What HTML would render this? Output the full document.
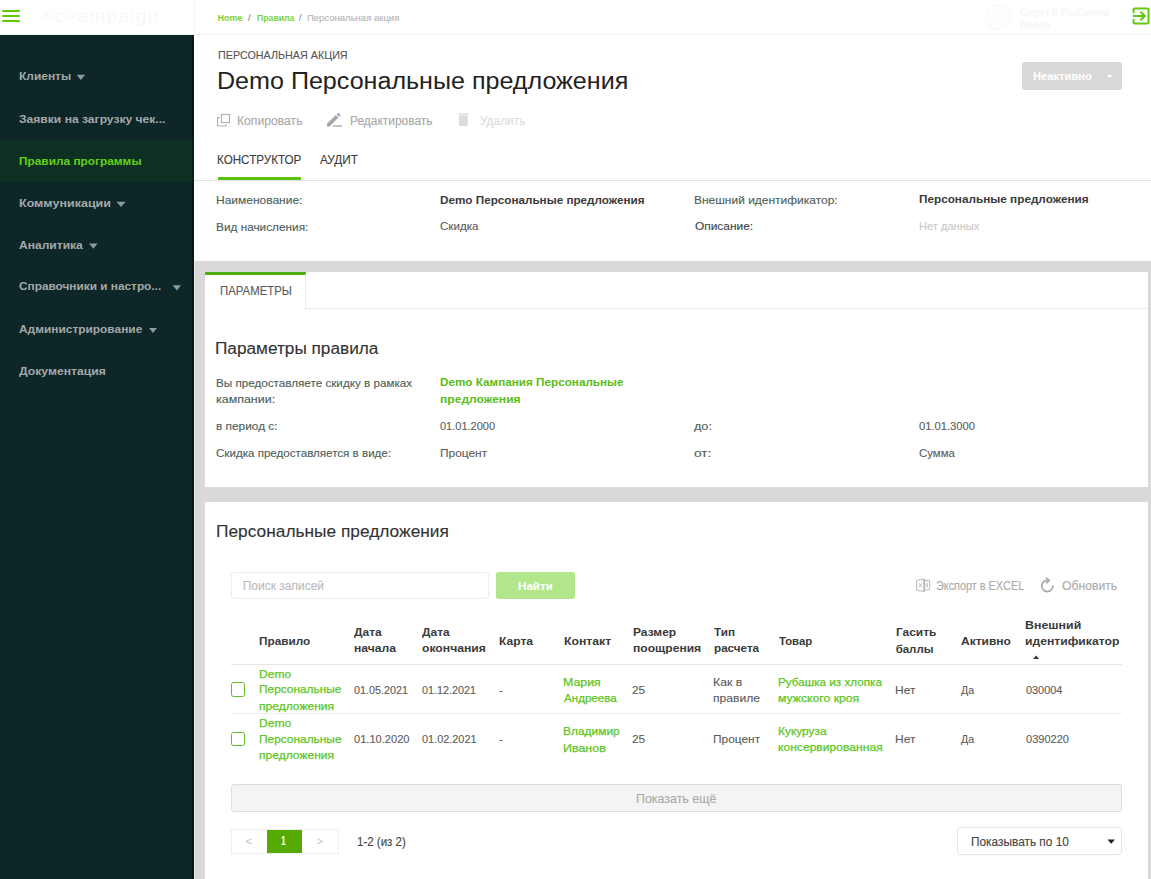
<!DOCTYPE html>
<html><head><meta charset="utf-8"><title>Demo Персональные предложения</title>
<style>
html,body{margin:0;padding:0;width:1151px;height:879px;overflow:hidden;background:#fff;}
body{position:relative;font-family:"Liberation Sans", sans-serif;}
.t{position:absolute;white-space:pre;line-height:1;font-family:"Liberation Sans", sans-serif;transform-origin:0 0;-webkit-text-stroke:0.12px currentColor;}
.t.bd{-webkit-text-stroke:0;}
.b{position:absolute;box-sizing:border-box;}
</style></head><body>
<!-- sidebar -->
<div class="b" style="left:0;top:35px;width:194px;height:844px;background:#0d2628;"></div>
<div class="b" style="left:0;top:140px;width:194px;height:42px;background:#0e3023;"></div>
<div class="b" style="left:192px;top:35px;width:2px;height:844px;background:rgba(0,0,0,0.35);"></div>
<!-- sidebar triangles -->
<svg class="b" style="left:0;top:0" width="194" height="400">
<g fill="#8c9c98">
<path d="M76.5 74.7 L85.2 74.7 L80.85 79.9Z"/>
<path d="M116.5 201.7 L125.6 201.7 L121.05 206.9Z"/>
<path d="M89 243.6 L97.7 243.6 L93.35 248.8Z"/>
<path d="M172.7 285.3 L181 285.3 L176.85 290.4Z"/>
<path d="M149 327.9 L157 327.9 L153 333Z"/>
</g></svg>
<!-- header -->
<div class="b" style="left:0;top:34px;width:1151px;height:1px;background:#f2f2f2;"></div>
<div class="b" style="left:194px;top:0;width:1px;height:35px;background:#f6f6f6;"></div>
<div class="b" style="left:2px;top:10px;width:18px;height:2px;background:#62cc00;border-radius:1px;"></div>
<div class="b" style="left:2px;top:15px;width:18px;height:2px;background:#62cc00;border-radius:1px;"></div>
<div class="b" style="left:2px;top:20px;width:18px;height:2px;background:#62cc00;border-radius:1px;"></div>
<div class="t" style="left:42px;top:5.5px;font-size:19px;color:#f7f7f7;letter-spacing:1.3px;-webkit-text-stroke:0;">&lt;c&gt;ampaign</div>
<!-- user -->
<div class="b" style="left:985px;top:3.5px;width:26.5px;height:26.5px;border-radius:50%;background:#fdfdfd;border:1px solid #f7f7f7;"></div>
<svg class="b" style="left:1130px;top:5px" width="21" height="22" viewBox="0 0 21 22">
<g fill="none" stroke="#63c90a" stroke-width="2" stroke-linecap="round" stroke-linejoin="round">
<path d="M3.6 7.4 V4.6 Q3.6 3.6 4.6 3.6 H17.5 Q18.5 3.6 18.5 4.6 V17.5 Q18.5 18.5 17.5 18.5 H4.6 Q3.6 18.5 3.6 17.5 V14.7"/>
<path d="M3.6 11 H14.5"/>
<path d="M11 7.2 L14.8 11 L11 14.8"/>
</g></svg>
<!-- status button -->
<div class="b" style="left:1022px;top:62px;width:100px;height:28px;background:#d9d9d9;border-radius:3px;"></div>
<svg class="b" style="left:1104px;top:72px" width="12" height="8"><path d="M2.8 2.9 L8.8 2.9 L5.8 5.8Z" fill="#fff"/></svg>
<!-- action icons -->
<svg class="b" style="left:214px;top:110px" width="20" height="20" viewBox="0 0 20 20">
<g fill="none" stroke="#b0b0b0" stroke-width="1.15">
<rect x="7.5" y="4.5" width="8" height="8"/>
<path d="M5.6 7.6 H3.6 V16 H12 V14.2"/>
</g></svg>
<svg class="b" style="left:324px;top:111px" width="20" height="20" viewBox="0 0 20 20">
<g fill="#a6a6a6">
<path d="M3 12.8 L11.8 4 L14.4 6.6 L5.6 15.4 L3 15.4Z"/>
<path d="M12.6 3.2 L13.6 2.2 Q14.3 1.6 15 2.2 L16.2 3.4 Q16.8 4.1 16.2 4.8 L15.2 5.8Z"/>
<rect x="9" y="14.3" width="9" height="1.3"/>
</g></svg>
<svg class="b" style="left:455px;top:112px" width="16" height="18" viewBox="0 0 16 18">
<g fill="#dcdcdc">
<rect x="3.2" y="1.2" width="10.4" height="1.6" rx="0.5"/>
<path d="M3.9 3.6 H12.8 V13.1 Q12.8 14.1 11.8 14.1 H4.9 Q3.9 14.1 3.9 13.1Z"/>
</g></svg>
<!-- tabs -->
<div class="b" style="left:218px;top:177px;width:83px;height:3px;background:#5bc30e;"></div>
<div class="b" style="left:194px;top:180px;width:957px;height:1px;background:#e3e3e3;"></div>
<!-- grey area -->
<div class="b" style="left:194px;top:261px;width:957px;height:618px;background:#d9d9d9;"></div>
<div class="b" style="left:194px;top:261px;width:1px;height:618px;background:#e8e8e8;"></div>
<!-- panel 1 -->
<div class="b" style="left:205px;top:272px;width:943px;height:215px;background:#fff;"></div>
<div class="b" style="left:205px;top:272px;width:101px;height:2.5px;background:#4fae0a;"></div>
<div class="b" style="left:305px;top:274px;width:1px;height:35px;background:#ebebeb;"></div>
<div class="b" style="left:305px;top:308px;width:843px;height:1px;background:#ebebeb;"></div>
<!-- panel 2 -->
<div class="b" style="left:205px;top:502px;width:943px;height:377px;background:#fff;"></div>
<div class="b" style="left:231px;top:572px;width:258px;height:27px;border:1px solid #ededed;border-radius:3px;"></div>
<div class="b" style="left:496px;top:572px;width:79px;height:27px;background:#b2e68a;border-radius:3px;"></div>
<!-- excel icon -->
<svg class="b" style="left:914px;top:577px" width="18" height="16" viewBox="0 0 18 16">
<g fill="none" stroke="#bdbdbd" stroke-width="1" stroke-linejoin="round">
<path d="M2.6 3.4 L10.2 2.1 V14.4 L2.6 13.3Z"/>
<path d="M10.2 3.3 H15.6 V12.8 H10.2"/>
<path d="M5.3 6.3 L7.7 10 M7.7 6.3 L5.3 10"/>
<path d="M12.1 6 V10.5 M13.5 6 V10.5 M12.1 4.3 V4.9 M13.5 4.3 V4.9" stroke-width="0.8"/>
</g>
<path d="M10.2 2.1 V14.4" stroke="#b0b0b0" stroke-width="1.4"/>
</svg>
<!-- refresh icon -->
<svg class="b" style="left:1039px;top:577px" width="18" height="18" viewBox="0 0 18 18">
<g fill="none" stroke="#a9a9a9" stroke-width="1.7" stroke-linecap="round" stroke-linejoin="round">
<path d="M8.3 3.4 A5.6 5.6 0 1 0 13.9 9"/>
<path d="M7.6 1.2 L10.3 3.5 L7.6 5.8"/>
</g></svg>
<!-- table lines -->
<div class="b" style="left:231px;top:664px;width:891px;height:1px;background:#e6e6e6;"></div>
<div class="b" style="left:231px;top:713px;width:891px;height:1px;background:#eeeeee;"></div>
<svg class="b" style="left:1030px;top:653px" width="12" height="8"><path d="M3.1 6 L9.1 6 L6.1 2.4Z" fill="#333"/></svg>
<!-- checkboxes -->
<div class="b" style="left:230.6px;top:682.2px;width:14.7px;height:14.7px;border:1.7px solid #64b82a;border-radius:2.5px;"></div>
<div class="b" style="left:230.6px;top:731.5px;width:14.7px;height:14.7px;border:1.7px solid #64b82a;border-radius:2.5px;"></div>
<!-- show more -->
<div class="b" style="left:231px;top:784px;width:891px;height:28px;background:#f4f4f4;border:1px solid #dedede;border-radius:3px;"></div>
<!-- pagination -->
<div class="b" style="left:230.5px;top:829px;width:108.5px;height:25px;border:1px solid #eeeeee;"></div>
<div class="b" style="left:267px;top:830px;width:35px;height:23px;background:#56ab02;"></div>
<!-- select -->
<div class="b" style="left:957px;top:827px;width:165px;height:28px;border:1px solid #e5e5e5;border-radius:3px;"></div>
<svg class="b" style="left:1104px;top:836px" width="14" height="10"><path d="M3.5 3.5 L11 3.5 L7.25 7.7Z" fill="#222"/></svg>

<div class="t bd" style="left:18.52px;top:71.48px;font-size:11.4px;color:#a4a9a7;font-weight:700;transform:scaleX(1.0493);">Клиенты</div><div class="t bd" style="left:18.72px;top:114.35px;font-size:11.4px;color:#a4a9a7;font-weight:700;transform:scaleX(1.0615);">Заявки на загрузку чек...</div><div class="t bd" style="left:18.82px;top:155.61px;font-size:11.4px;color:#62d01a;font-weight:700;transform:scaleX(1.0415);">Правила программы</div><div class="t bd" style="left:18.63px;top:198.46px;font-size:11.4px;color:#a4a9a7;font-weight:700;transform:scaleX(1.0983);">Коммуникации</div><div class="t bd" style="left:19.29px;top:239.72px;font-size:11.4px;color:#a4a9a7;font-weight:700;transform:scaleX(1.0584);">Аналитика</div><div class="t bd" style="left:19.23px;top:281.26px;font-size:11.4px;color:#a4a9a7;font-weight:700;transform:scaleX(1.0378);">Справочники и настро...</div><div class="t bd" style="left:19.30px;top:324.40px;font-size:11.4px;color:#a4a9a7;font-weight:700;transform:scaleX(1.0451);">Администрирование</div><div class="t bd" style="left:18.81px;top:366.38px;font-size:11.4px;color:#a4a9a7;font-weight:700;transform:scaleX(1.0689);">Документация</div><div class="t bd" style="left:217.58px;top:13.76px;font-size:9px;color:#79d23c;font-weight:700;">Home</div><div class="t" style="left:247.76px;top:13.92px;font-size:9px;color:#888;transform:scaleX(1.0333);">/</div><div class="t bd" style="left:257.00px;top:13.71px;font-size:9px;color:#79d23c;font-weight:700;transform:scaleX(0.9659);">Правила</div><div class="t" style="left:298.54px;top:13.92px;font-size:9px;color:#888;transform:scaleX(0.9667);">/</div><div class="t" style="left:307.46px;top:13.79px;font-size:9px;color:#b5b5b5;transform:scaleX(1.0565);">Персональная акция</div><div class="t bd" style="left:1020.30px;top:7.37px;font-size:11px;color:#f6f6f6;font-weight:700;transform:scaleX(0.9897);-webkit-text-stroke:0;">Сергей Рыбаков</div><div class="t bd" style="left:1019.50px;top:19.68px;font-size:11px;color:#f6f6f6;font-weight:700;transform:scaleX(0.9778);-webkit-text-stroke:0;">Demo</div><div class="t" style="left:217.77px;top:50.10px;font-size:11.5px;color:#555;transform:scaleX(0.9344);">ПЕРСОНАЛЬНАЯ АКЦИЯ</div><div class="t" style="left:217.30px;top:69.71px;font-size:23px;color:#222;transform:scaleX(1.0907);-webkit-text-stroke:0;">Demo Персональные предложения</div><div class="t bd" style="left:1032.75px;top:70.83px;font-size:11.5px;color:#ffffff;font-weight:700;transform:scaleX(0.9715);">Неактивно</div><div class="t" style="left:236.60px;top:115.33px;font-size:12px;color:#a8a8a8;transform:scaleX(1.0133);">Копировать</div><div class="t" style="left:350.28px;top:115.32px;font-size:12px;color:#a8a8a8;transform:scaleX(0.9949);">Редактировать</div><div class="t" style="left:479.53px;top:115.31px;font-size:12px;color:#dcdcdc;transform:scaleX(0.9897);">Удалить</div><div class="t" style="left:217.25px;top:153.01px;font-size:13px;color:#404040;transform:scaleX(0.8954);">КОНСТРУКТОР</div><div class="t" style="left:319.70px;top:152.90px;font-size:13px;color:#404040;transform:scaleX(0.9064);">АУДИТ</div><div class="t" style="left:215.67px;top:194.74px;font-size:11.5px;color:#4d605a;transform:scaleX(1.0421);">Наименование:</div><div class="t" style="left:215.84px;top:221.61px;font-size:11.5px;color:#4d605a;transform:scaleX(1.0267);">Вид начисления:</div><div class="t bd" style="left:440.42px;top:194.76px;font-size:11.5px;color:#3a3a3a;font-weight:700;transform:scaleX(1.0168);">Demo Персональные предложения</div><div class="t" style="left:440.35px;top:221.26px;font-size:11.5px;color:#5c5c5c;transform:scaleX(1.0070);">Скидка</div><div class="t" style="left:694.47px;top:194.64px;font-size:11.5px;color:#4d605a;transform:scaleX(1.0409);">Внешний идентификатор:</div><div class="t" style="left:694.99px;top:221.10px;font-size:11.5px;color:#444;transform:scaleX(1.0354);">Описание:</div><div class="t bd" style="left:919.08px;top:194.23px;font-size:11.5px;color:#3a3a3a;font-weight:700;transform:scaleX(1.0216);">Персональные предложения</div><div class="t" style="left:919.17px;top:221.07px;font-size:11.5px;color:#c8c8c8;transform:scaleX(0.9634);">Нет данных</div><div class="t" style="left:219.68px;top:285.45px;font-size:12px;color:#5a5a5a;transform:scaleX(0.9492);">ПАРАМЕТРЫ</div><div class="t" style="left:215.07px;top:341.43px;font-size:16px;color:#333;transform:scaleX(1.0758);">Параметры правила</div><div class="t" style="left:215.85px;top:377.61px;font-size:11.5px;color:#4d605a;transform:scaleX(1.0149);">Вы предоставляете скидку в рамках</div><div class="t" style="left:215.68px;top:393.91px;font-size:11.5px;color:#4d605a;transform:scaleX(1.0824);">кампании:</div><div class="t" style="left:215.80px;top:420.86px;font-size:11.5px;color:#4d605a;transform:scaleX(1.0305);">в период с:</div><div class="t" style="left:215.87px;top:447.90px;font-size:11.5px;color:#4d605a;transform:scaleX(1.0074);">Скидка предоставляется в виде:</div><div class="t bd" style="left:440.42px;top:377.20px;font-size:11.5px;color:#5bbd16;font-weight:700;transform:scaleX(1.0173);">Demo Кампания Персональные</div><div class="t bd" style="left:440.33px;top:393.54px;font-size:11.5px;color:#5bbd16;font-weight:700;transform:scaleX(1.0496);">предложения</div><div class="t" style="left:440.40px;top:420.74px;font-size:11.5px;color:#5c5c5c;transform:scaleX(0.9554);">01.01.2000</div><div class="t" style="left:440.42px;top:447.91px;font-size:11.5px;color:#5c5c5c;transform:scaleX(1.0342);">Процент</div><div class="t" style="left:693.69px;top:420.90px;font-size:11.5px;color:#4d605a;transform:scaleX(1.0982);">до:</div><div class="t" style="left:693.86px;top:447.97px;font-size:11.5px;color:#4d605a;transform:scaleX(1.1853);">от:</div><div class="t" style="left:919.40px;top:420.74px;font-size:11.5px;color:#5c5c5c;transform:scaleX(0.9722);">01.01.3000</div><div class="t" style="left:919.37px;top:447.89px;font-size:11.5px;color:#5c5c5c;transform:scaleX(0.9921);">Сумма</div><div class="t" style="left:215.64px;top:522.51px;font-size:17px;color:#333;transform:scaleX(1.0186);">Персональные предложения</div><div class="t" style="left:242.68px;top:579.67px;font-size:12px;color:#bbbbbb;">Поиск записей</div><div class="t bd" style="left:517.84px;top:580.74px;font-size:11.5px;color:#ffffff;font-weight:700;transform:scaleX(1.0097);">Найти</div><div class="t" style="left:936.30px;top:580.22px;font-size:12px;color:#ababab;transform:scaleX(0.9052);">Экспорт в EXCEL</div><div class="t" style="left:1062.38px;top:580.33px;font-size:12px;color:#ababab;transform:scaleX(1.0164);">Обновить</div><div class="t bd" style="left:259.24px;top:635.50px;font-size:11.5px;color:#3a3a3a;font-weight:700;transform:scaleX(1.0247);">Правило</div><div class="t bd" style="left:354.41px;top:627.13px;font-size:11.5px;color:#3a3a3a;font-weight:700;transform:scaleX(1.0373);">Дата</div><div class="t bd" style="left:353.83px;top:642.93px;font-size:11.5px;color:#3a3a3a;font-weight:700;transform:scaleX(1.0531);">начала</div><div class="t bd" style="left:422.01px;top:627.10px;font-size:11.5px;color:#3a3a3a;font-weight:700;transform:scaleX(1.0373);">Дата</div><div class="t bd" style="left:421.63px;top:643.29px;font-size:11.5px;color:#3a3a3a;font-weight:700;transform:scaleX(1.0586);">окончания</div><div class="t bd" style="left:498.82px;top:635.74px;font-size:11.5px;color:#3a3a3a;font-weight:700;transform:scaleX(1.0471);">Карта</div><div class="t bd" style="left:563.78px;top:635.60px;font-size:11.5px;color:#3a3a3a;font-weight:700;transform:scaleX(1.0620);">Контакт</div><div class="t bd" style="left:632.63px;top:627.48px;font-size:11.5px;color:#3a3a3a;font-weight:700;transform:scaleX(1.0425);">Размер</div><div class="t bd" style="left:632.67px;top:643.35px;font-size:11.5px;color:#3a3a3a;font-weight:700;transform:scaleX(1.0512);">поощрения</div><div class="t bd" style="left:714.41px;top:627.48px;font-size:11.5px;color:#3a3a3a;font-weight:700;transform:scaleX(1.0174);">Тип</div><div class="t bd" style="left:713.82px;top:643.18px;font-size:11.5px;color:#3a3a3a;font-weight:700;transform:scaleX(1.0144);">расчета</div><div class="t bd" style="left:779.44px;top:635.75px;font-size:11.5px;color:#3a3a3a;font-weight:700;transform:scaleX(0.9833);">Товар</div><div class="t bd" style="left:895.63px;top:627.48px;font-size:11.5px;color:#3a3a3a;font-weight:700;transform:scaleX(1.0369);">Гасить</div><div class="t bd" style="left:895.63px;top:643.69px;font-size:11.5px;color:#3a3a3a;font-weight:700;">баллы</div><div class="t bd" style="left:960.84px;top:635.56px;font-size:11.5px;color:#3a3a3a;font-weight:700;transform:scaleX(1.0444);">Активно</div><div class="t bd" style="left:1025.40px;top:619.56px;font-size:11.5px;color:#3a3a3a;font-weight:700;transform:scaleX(1.0755);">Внешний</div><div class="t bd" style="left:1025.13px;top:635.52px;font-size:11.5px;color:#3a3a3a;font-weight:700;transform:scaleX(1.0570);">идентификатор</div><div class="t" style="left:259.24px;top:668.50px;font-size:11.5px;color:#5ec624;transform:scaleX(1.0475);-webkit-text-stroke:0.25px currentColor;">Demo</div><div class="t" style="left:259.23px;top:684.42px;font-size:11.5px;color:#5ec624;transform:scaleX(1.0329);-webkit-text-stroke:0.25px currentColor;">Персональные</div><div class="t" style="left:259.37px;top:700.78px;font-size:11.5px;color:#5ec624;transform:scaleX(1.0474);-webkit-text-stroke:0.25px currentColor;">предложения</div><div class="t" style="left:354.07px;top:684.70px;font-size:11.5px;color:#5c5c5c;transform:scaleX(0.9382);">01.05.2021</div><div class="t" style="left:422.16px;top:684.58px;font-size:11.5px;color:#5c5c5c;transform:scaleX(0.9392);">01.12.2021</div><div class="t" style="left:498.76px;top:684.70px;font-size:11.5px;color:#5c5c5c;transform:scaleX(0.9954);">-</div><div class="t" style="left:563.39px;top:676.73px;font-size:11.5px;color:#5ec624;transform:scaleX(1.0733);-webkit-text-stroke:0.25px currentColor;">Мария</div><div class="t" style="left:563.92px;top:692.97px;font-size:11.5px;color:#5ec624;transform:scaleX(1.0091);-webkit-text-stroke:0.25px currentColor;">Андреева</div><div class="t" style="left:632.37px;top:684.71px;font-size:11.5px;color:#5c5c5c;transform:scaleX(1.0344);">25</div><div class="t" style="left:712.52px;top:676.70px;font-size:11.5px;color:#5c5c5c;transform:scaleX(1.0708);">Как в</div><div class="t" style="left:712.82px;top:693.37px;font-size:11.5px;color:#5c5c5c;transform:scaleX(1.0530);">правиле</div><div class="t" style="left:777.72px;top:676.95px;font-size:11.5px;color:#5ec624;transform:scaleX(1.0179);-webkit-text-stroke:0.25px currentColor;">Рубашка из хлопка</div><div class="t" style="left:777.61px;top:692.87px;font-size:11.5px;color:#5ec624;transform:scaleX(1.0609);-webkit-text-stroke:0.25px currentColor;">мужского кроя</div><div class="t" style="left:895.30px;top:684.83px;font-size:11.5px;color:#5c5c5c;transform:scaleX(1.0425);">Нет</div><div class="t" style="left:961.26px;top:684.83px;font-size:11.5px;color:#5c5c5c;transform:scaleX(0.9204);">Да</div><div class="t" style="left:1025.85px;top:684.75px;font-size:11.5px;color:#5c5c5c;transform:scaleX(0.9474);">030004</div><div class="t" style="left:259.15px;top:717.67px;font-size:11.5px;color:#5ec624;transform:scaleX(1.0503);-webkit-text-stroke:0.25px currentColor;">Demo</div><div class="t" style="left:259.29px;top:733.93px;font-size:11.5px;color:#5ec624;transform:scaleX(1.0339);-webkit-text-stroke:0.25px currentColor;">Персональные</div><div class="t" style="left:259.37px;top:749.82px;font-size:11.5px;color:#5ec624;transform:scaleX(1.0474);-webkit-text-stroke:0.25px currentColor;">предложения</div><div class="t" style="left:353.75px;top:734.46px;font-size:11.5px;color:#5c5c5c;transform:scaleX(0.9642);">01.10.2020</div><div class="t" style="left:422.08px;top:734.49px;font-size:11.5px;color:#5c5c5c;transform:scaleX(0.9480);">01.02.2021</div><div class="t" style="left:498.76px;top:734.30px;font-size:11.5px;color:#5c5c5c;transform:scaleX(0.9954);">-</div><div class="t" style="left:563.14px;top:726.00px;font-size:11.5px;color:#5ec624;transform:scaleX(1.0390);-webkit-text-stroke:0.25px currentColor;">Владимир</div><div class="t" style="left:563.27px;top:742.59px;font-size:11.5px;color:#5ec624;transform:scaleX(1.0838);-webkit-text-stroke:0.25px currentColor;">Иванов</div><div class="t" style="left:632.37px;top:734.48px;font-size:11.5px;color:#5c5c5c;transform:scaleX(1.0344);">25</div><div class="t" style="left:712.64px;top:734.24px;font-size:11.5px;color:#5c5c5c;transform:scaleX(1.0357);">Процент</div><div class="t" style="left:777.81px;top:726.45px;font-size:11.5px;color:#5ec624;transform:scaleX(1.0377);-webkit-text-stroke:0.25px currentColor;">Кукуруза</div><div class="t" style="left:777.77px;top:742.49px;font-size:11.5px;color:#5ec624;transform:scaleX(1.0524);-webkit-text-stroke:0.25px currentColor;">консервированная</div><div class="t" style="left:895.30px;top:733.87px;font-size:11.5px;color:#5c5c5c;transform:scaleX(1.0425);">Нет</div><div class="t" style="left:961.26px;top:734.02px;font-size:11.5px;color:#5c5c5c;transform:scaleX(0.9204);">Да</div><div class="t" style="left:1025.82px;top:734.15px;font-size:11.5px;color:#5c5c5c;transform:scaleX(0.9605);">0390220</div><div class="t" style="left:636.24px;top:792.52px;font-size:12px;color:#aaaaaa;transform:scaleX(1.0355);">Показать ещё</div><div class="t" style="left:357.19px;top:835.85px;font-size:12px;color:#444;transform:scaleX(0.9577);">1-2 (из 2)</div><div class="t" style="left:970.84px;top:835.88px;font-size:12px;color:#444;transform:scaleX(0.9878);">Показывать по 10</div><div class="t bd" style="left:281.16px;top:835.20px;font-size:12px;color:#ffffff;font-weight:700;transform:scaleX(0.7143);">1</div><div class="t" style="left:245.39px;top:835.53px;font-size:11px;color:#c8c8c8;">&lt;</div><div class="t" style="left:316.60px;top:835.52px;font-size:11px;color:#c8c8c8;transform:scaleX(0.9167);">&gt;</div>
</body></html>
